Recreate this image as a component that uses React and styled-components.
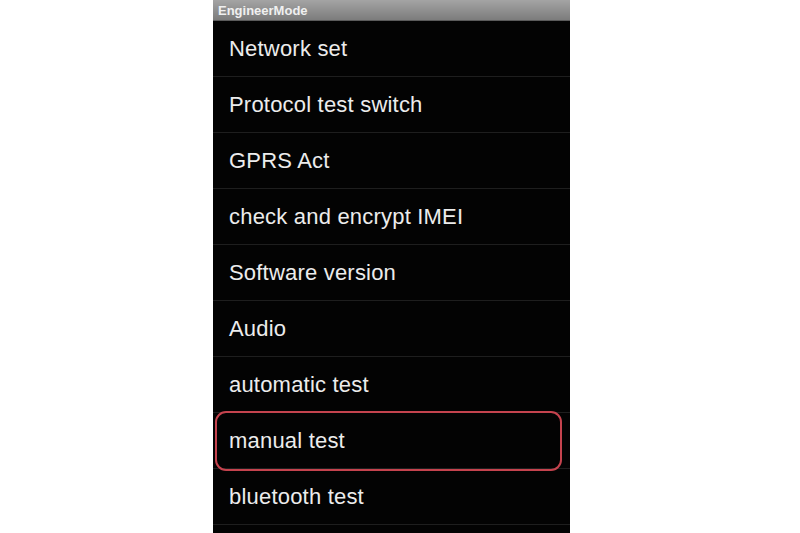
import styled, { createGlobalStyle } from 'styled-components'

const GlobalStyle = createGlobalStyle`
  html, body {
    margin: 0;
    padding: 0;
    background: #ffffff;
    overflow: hidden;
  }
`

const Page = styled.div`
  width: 800px;
  height: 533px;
  display: flex;
  background: #ffffff;
  overflow: hidden;
`

const Screen = styled.div`
  width: 357px;
  margin-left: 213px;
  height: 533px;
  background: #030303;
  display: flex;
  flex-direction: column;
  overflow: hidden;
`

const TitleBar = styled.div`
  height: 21px;
  flex-shrink: 0;
  display: flex;
  align-items: center;
  padding-left: 5px;
  background: linear-gradient(#a4a4a4, #7c7c7c);
  border-bottom: 1px solid #5a5a5a;
  box-sizing: border-box;
  color: #f0f0f0;
  font-family: 'Liberation Sans', Arial, sans-serif;
  font-weight: bold;
  font-size: 13px;
`

const List = styled.div`
  display: flex;
  flex-direction: column;
`

const Row = styled.div`
  position: relative;
  height: 56px;
  flex-shrink: 0;
  display: flex;
  align-items: center;
  padding-left: 16px;
  box-sizing: border-box;
  border-bottom: 1px solid #1e1e1e;
  color: #ececec;
  font-family: 'Liberation Sans', Arial, sans-serif;
  font-size: 22px;
  letter-spacing: 0.2px;

  ${({ $marked }) => $marked && `
    &::after {
      content: '';
      position: absolute;
      left: 2px;
      right: 8px;
      top: -2px;
      bottom: -3px;
      border: 2.5px solid #c5434e;
      border-radius: 11px;
    }
  `}
`

const items = [
  'Network set',
  'Protocol test switch',
  'GPRS Act',
  'check and encrypt IMEI',
  'Software version',
  'Audio',
  'automatic test',
  'manual test',
  'bluetooth test',
]

const App = () => {
  return (
    <Page>
      <GlobalStyle />
      <Screen>
        <TitleBar>EngineerMode</TitleBar>
        <List>
          {items.map((item) => (
            <Row key={item} $marked={item === 'manual test'}>{item}</Row>
          ))}
        </List>
      </Screen>
    </Page>
  )
}

export default App
